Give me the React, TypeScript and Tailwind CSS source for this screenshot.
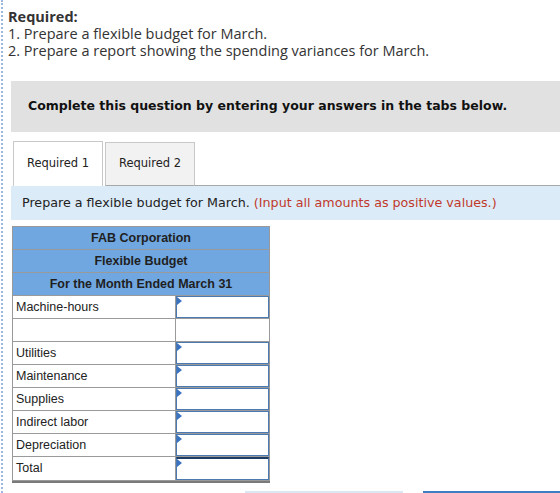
import React from "react";

const rows: { label: string; input: boolean; total?: boolean }[] = [
  { label: "Machine-hours", input: true },
  { label: "", input: false },
  { label: "Utilities", input: true },
  { label: "Maintenance", input: true },
  { label: "Supplies", input: true },
  { label: "Indirect labor", input: true },
  { label: "Depreciation", input: true },
  { label: "Total", input: true, total: true },
];

function InputCell({ total }: { total?: boolean }) {
  return (
    <div
      className={`relative h-full w-full bg-white border border-[#4b79b2] ${
        total ? "border-t-2 border-t-[#1d3c63]" : ""
      }`}
    >
      <div className="absolute left-0 top-0 w-0 h-0 border-t-[4px] border-b-[4px] border-l-[5px] border-t-transparent border-b-transparent border-l-[#3b73c0]" />
    </div>
  );
}

export default function App() {
  return (
    <div className="relative w-[560px] h-[493px] overflow-hidden bg-white">
      <div className="absolute left-[1px] top-0 h-full border-l-2 border-dotted border-[#9db8de]" />
      <div className="pl-[8px] pt-[8px] text-[14.5px] leading-[17px] text-[#333] font-['Open_Sans',sans-serif]">
        <div className="font-bold">Required:</div>
        <div>1. Prepare a flexible budget for March.</div>
        <div>2. Prepare a report showing the spending variances for March.</div>
      </div>
      <div className="ml-[11px] mt-[22px] h-[51px] bg-[#e1e1e1] flex items-center pl-[17px] font-['DejaVu_Sans',Verdana,sans-serif] text-[12.5px] font-bold text-[#111]">
        Complete this question by entering your answers in the tabs below.
      </div>
      <div className="ml-[13px] mt-[9px] flex items-end h-[45px] font-['DejaVu_Sans',Verdana,sans-serif] text-[11.5px] text-[#222]">
        <div className="w-[90px] h-[45px] bg-white border border-b-0 border-[#c8c8c8] flex items-center justify-center">
          Required 1
        </div>
        <div className="ml-[2px] w-[90px] h-[44px] bg-[#f2f2f2] border border-[#c8c8c8] border-b-[#a8a8a8] flex items-center justify-center">
          Required 2
        </div>
        <div className="flex-1 h-[1px] bg-[#a8a8a8]" />
      </div>
      <div className="ml-[11px] h-[34px] bg-[#dcebf8] flex items-center pl-[11px] font-['DejaVu_Sans',Verdana,sans-serif] text-[12.7px] text-[#222]">
        Prepare a flexible budget for March.&nbsp;
        <span className="text-[#c0392b]">(Input all amounts as positive values.)</span>
      </div>
      <div className="ml-[12px] mt-[6px] w-[258px] font-['Liberation_Sans',Arial,sans-serif] text-[12.5px] text-[#222] border border-[#999] shadow-[0_2px_0_#7a7a7a]">
        {["FAB Corporation", "Flexible Budget", "For the Month Ended March 31"].map((t) => (
          <div
            key={t}
            className="h-[23px] bg-[#70a7e0] border-b border-[#9a9a9a] flex items-center justify-center font-bold text-[#1f1f1f]"
          >
            {t}
          </div>
        ))}
        {rows.map((r, i) => (
          <div
            key={i}
            className={`h-[23px] flex ${i < rows.length - 1 ? "border-b border-[#9a9a9a]" : ""}`}
          >
            <div className="w-[163px] border-r border-[#9a9a9a] flex items-center pl-[3px]">
              {r.label}
            </div>
            <div className="flex-1">{r.input ? <InputCell total={r.total} /> : null}</div>
          </div>
        ))}
      </div>
      <div className="absolute left-[245px] top-[491px] w-[158px] h-[2px] bg-[#dae7f4]" />
      <div className="absolute left-[423px] top-[491px] w-[137px] h-[2px] bg-[#3e7cc6]" />
    </div>
  );
}
